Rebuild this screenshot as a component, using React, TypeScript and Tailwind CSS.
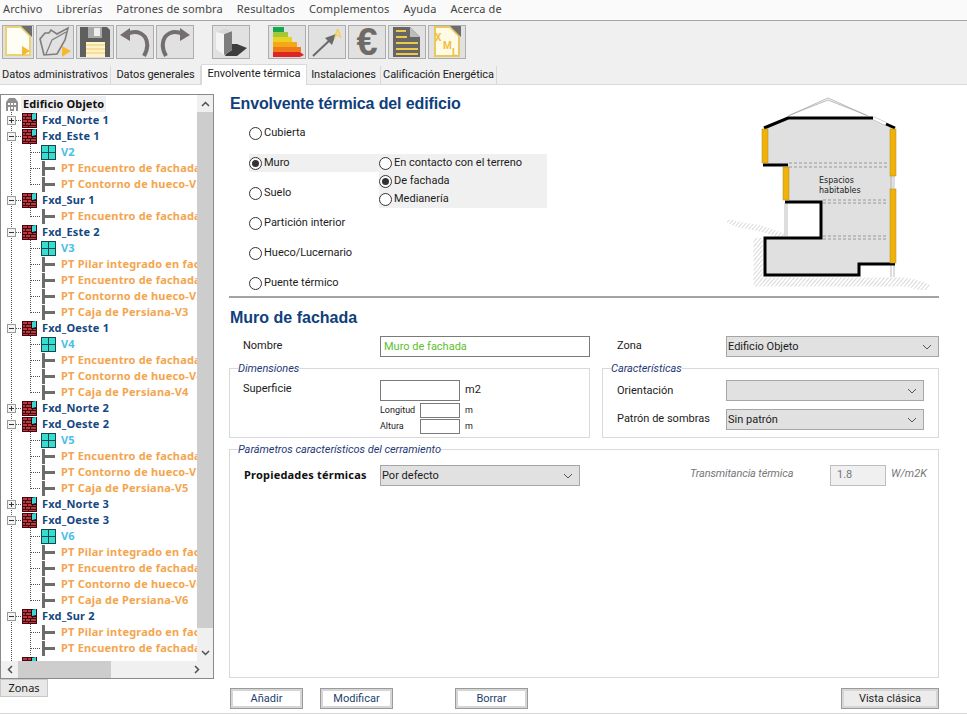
import React from "react";

const menu = ["Archivo", "Librerías", "Patrones de sombra", "Resultados", "Complementos", "Ayuda", "Acerca de"];

function WallIcon() {
  return (
    <svg width="15" height="15" viewBox="0 0 15 15" className="shrink-0">
      <rect x="0" y="0" width="15" height="15" fill="#3a0f14" />
      <g fill="#c9303c">
        <rect x="1" y="1" width="4" height="2" /><rect x="6" y="1" width="3" height="2" />
        <rect x="1" y="4" width="2" height="2" /><rect x="4" y="4" width="5" height="2" />
        <rect x="1" y="7" width="4" height="2" /><rect x="6" y="7" width="4" height="2" /><rect x="11" y="8" width="3" height="1" />
        <rect x="1" y="10" width="2" height="2" /><rect x="4" y="10" width="4" height="2" /><rect x="9" y="10" width="5" height="2" />
        <rect x="1" y="13" width="5" height="1" /><rect x="7" y="13" width="7" height="1" />
      </g>
      <path d="M10 1 L14 0 V6 L10 7 Z" fill="#39d8d4" />
      <rect x="9" y="0" width="1" height="8" fill="#111" />
      <rect x="10" y="7" width="5" height="1" fill="#111" />
    </svg>
  );
}

function WindowIcon() {
  return (
    <svg width="15" height="15" viewBox="0 0 15 15" className="shrink-0">
      <rect x="0" y="0" width="15" height="15" fill="#1b4547" />
      <rect x="1" y="1" width="6" height="6" fill="#35ded2" />
      <rect x="8" y="1" width="6" height="6" fill="#35ded2" />
      <rect x="1" y="8" width="6" height="6" fill="#35ded2" />
      <rect x="8" y="8" width="6" height="6" fill="#35ded2" />
    </svg>
  );
}

function ThermalIcon() {
  return (
    <svg width="15" height="15" viewBox="0 0 15 15" className="shrink-0">
      <rect x="1" y="0" width="3" height="15" fill="#6f6a6c" />
      <rect x="4" y="6" width="10" height="3" fill="#6f6a6c" />
    </svg>
  );
}

type Row = { t: string; k: "wall" | "win" | "pt"; open?: boolean; last?: boolean };

const rows: Row[] = [
  { t: "Fxd_Norte 1", k: "wall" },
  { t: "Fxd_Este 1", k: "wall", open: true },
  { t: "V2", k: "win" },
  { t: "PT Encuentro de fachada con forjado", k: "pt" },
  { t: "PT Contorno de hueco-V2", k: "pt", last: true },
  { t: "Fxd_Sur 1", k: "wall", open: true },
  { t: "PT Encuentro de fachada con forjado", k: "pt", last: true },
  { t: "Fxd_Este 2", k: "wall", open: true },
  { t: "V3", k: "win" },
  { t: "PT Pilar integrado en fachada", k: "pt" },
  { t: "PT Encuentro de fachada con forjado", k: "pt" },
  { t: "PT Contorno de hueco-V3", k: "pt" },
  { t: "PT Caja de Persiana-V3", k: "pt", last: true },
  { t: "Fxd_Oeste 1", k: "wall", open: true },
  { t: "V4", k: "win" },
  { t: "PT Encuentro de fachada con forjado", k: "pt" },
  { t: "PT Contorno de hueco-V4", k: "pt" },
  { t: "PT Caja de Persiana-V4", k: "pt", last: true },
  { t: "Fxd_Norte 2", k: "wall" },
  { t: "Fxd_Oeste 2", k: "wall", open: true },
  { t: "V5", k: "win" },
  { t: "PT Encuentro de fachada con forjado", k: "pt" },
  { t: "PT Contorno de hueco-V5", k: "pt" },
  { t: "PT Caja de Persiana-V5", k: "pt", last: true },
  { t: "Fxd_Norte 3", k: "wall" },
  { t: "Fxd_Oeste 3", k: "wall", open: true },
  { t: "V6", k: "win" },
  { t: "PT Pilar integrado en fachada", k: "pt" },
  { t: "PT Encuentro de fachada con forjado", k: "pt" },
  { t: "PT Contorno de hueco-V6", k: "pt" },
  { t: "PT Caja de Persiana-V6", k: "pt", last: true },
  { t: "Fxd_Sur 2", k: "wall", open: true },
  { t: "PT Pilar integrado en fachada", k: "pt" },
  { t: "PT Encuentro de fachada con forjado", k: "pt" },
  { t: "", k: "wall" },
];

function Gutter({ r }: { r: Row }) {
  const d = "#555";
  const dash = "1 1";
  if (r.k === "wall") {
    return (
      <svg width="21" height="16" className="shrink-0">
        <line x1="10.5" y1="0" x2="10.5" y2="16" stroke={d} strokeDasharray={dash} />
        <line x1="15" y1="8.5" x2="21" y2="8.5" stroke={d} strokeDasharray={dash} />
        {r.t && <rect x="6.5" y="4.5" width="8" height="8" fill="#f4f4f4" stroke="#9a9a9a" />}
        {r.t && <line x1="8" y1="8.5" x2="13" y2="8.5" stroke="#334" />}
        {r.t && !r.open && <line x1="10.5" y1="6" x2="10.5" y2="11" stroke="#334" />}
      </svg>
    );
  }
  return (
    <svg width="40" height="16" className="shrink-0">
      <line x1="10.5" y1="0" x2="10.5" y2="16" stroke={d} strokeDasharray={dash} />
      <line x1="29.5" y1="0" x2="29.5" y2={r.last ? 9 : 16} stroke={d} strokeDasharray={dash} />
      <line x1="30" y1="8.5" x2="40" y2="8.5" stroke={d} strokeDasharray={dash} />
    </svg>
  );
}

function TreeRow({ r }: { r: Row }) {
  return (
    <div className="flex h-4 items-center whitespace-nowrap">
      <Gutter r={r} />
      {r.k === "wall" ? <WallIcon /> : r.k === "win" ? <WindowIcon /> : <ThermalIcon />}
      <span
        className={
          "ml-[5px] text-[11px] font-bold tracking-[0.2px] " +
          (r.k === "wall" ? "text-[#16477f]" : r.k === "win" ? "text-[#4dbde8]" : "text-[#f2a64f]")
        }
      >
        {r.t}
      </span>
    </div>
  );
}

function TreePanel() {
  return (
    <div className="flex h-[585px] w-[214px] shrink-0 flex-col border border-[#8a8a8a] bg-white">
      <div className="flex min-h-0 flex-1">
        <div className="min-w-0 flex-1 overflow-hidden pt-[1px]">
          <div className="flex h-4 items-center">
            <svg width="16" height="15" viewBox="0 0 16 15" className="ml-[3px] shrink-0">
              <path d="M2 5 L5 1 H11 L14 5 V14 H2 Z" fill="#8f8f8f" />
              <g fill="#fff">
                <rect x="4" y="6" width="2" height="2" /><rect x="7" y="6" width="2" height="2" /><rect x="10" y="6" width="2" height="2" />
                <rect x="4" y="10" width="2" height="4" /><rect x="10" y="10" width="2" height="4" /><rect x="7" y="10" width="2" height="2" />
              </g>
            </svg>
            <span className="ml-[1px] bg-[#f0f0f0] px-[2px] text-[11px] font-bold tracking-[0.1px] text-[#111]">Edificio Objeto</span>
          </div>
          {rows.map((r, i) => (
            <TreeRow key={i} r={r} />
          ))}
        </div>
        <div className="flex w-[16px] shrink-0 flex-col bg-[#f0f0f0]">
          <div className="flex h-[17px] shrink-0 items-center justify-center">
            <svg width="9" height="6" viewBox="0 0 9 6"><path d="M1 5 L4.5 1.5 L8 5" fill="none" stroke="#505050" strokeWidth="1.5" /></svg>
          </div>
          <div className="h-[516px] shrink-0 bg-[#cdcdcd]" />
          <div className="flex-1" />
          <div className="flex h-[17px] shrink-0 items-center justify-center">
            <svg width="9" height="6" viewBox="0 0 9 6"><path d="M1 1 L4.5 4.5 L8 1" fill="none" stroke="#505050" strokeWidth="1.5" /></svg>
          </div>
        </div>
      </div>
      <div className="flex h-[17px] shrink-0 bg-[#f0f0f0]">
        <div className="flex w-[17px] items-center justify-center">
          <svg width="6" height="9" viewBox="0 0 6 9"><path d="M5 1 L1.5 4.5 L5 8" fill="none" stroke="#505050" strokeWidth="1.5" /></svg>
        </div>
        <div className="w-[93px] bg-[#cdcdcd]" />
        <div className="flex-1" />
        <div className="flex w-[33px] items-center justify-center">
          <svg width="6" height="9" viewBox="0 0 6 9"><path d="M1 1 L4.5 4.5 L1 8" fill="none" stroke="#505050" strokeWidth="1.5" /></svg>
        </div>
      </div>
    </div>
  );
}

function Radio({ label, on }: { label: string; on?: boolean }) {
  return (
    <div className="flex items-center text-[11px] text-[#1c1c1c]">
      <span className="mr-[2px] flex h-[13px] w-[13px] items-center justify-center rounded-full border border-[#333] bg-white">
        {on && <span className="h-[7px] w-[7px] rounded-full bg-[#333]" />}
      </span>
      {label}
    </div>
  );
}

function Chevron() {
  return (
    <svg width="10" height="6" viewBox="0 0 10 6" className="shrink-0">
      <path d="M1 1 L5 5 L9 1" fill="none" stroke="#555" strokeWidth="1" />
    </svg>
  );
}

function Select({ value, className }: { value: string; className: string }) {
  return (
    <div className={"flex h-[21px] shrink-0 items-center justify-between border border-[#a6a6a6] bg-[#e1e1e1] pl-[1px] pr-[6px] pt-[1px] text-[11px] text-[#1c1c1c] " + className}>
      <span>{value}</span>
      <Chevron />
    </div>
  );
}

function Btn({ label, className }: { label: string; className: string }) {
  return (
    <button className={"h-[21px] shrink-0 border-[3px] border-[#d6d6d6] text-[11px] outline outline-1 -outline-offset-1 outline-[#9a9a9a] " + className}>
      {label}
    </button>
  );
}

function Building() {
  return (
    <svg width="240" height="200" viewBox="0 0 240 200" className="block shrink-0">
      <defs>
        <pattern id="h" width="3" height="3" patternUnits="userSpaceOnUse" patternTransform="rotate(40)">
          <line x1="0" y1="0" x2="0" y2="3" stroke="#aaa" strokeWidth="0.9" />
        </pattern>
      </defs>
      <path d="M9 130 Q11 134 33 137 Q50 140 64 147" fill="none" stroke="url(#h)" strokeWidth="6" />
      <path d="M38 148 V192 H172 Q190 190 208 199" fill="none" stroke="url(#h)" strokeWidth="9" />
      <path d="M68 26 L108 8 L148 26 M70 25 L108 10 L146 25" fill="none" stroke="#a8a8a8" strokeWidth="0.8" />
      <path d="M44 38 V75 H68 V112 H101 V148 H45 V185 H138 V174 H173 V38 L165 33 L150 28 H68 Z" fill="#e0e0e0" />
      <path d="M153 28 L166 34" stroke="#999" strokeWidth="3.5" />
      <path d="M153 28 L166 34" stroke="#fff" strokeWidth="2.5" />
      <g stroke="#888" strokeDasharray="3 2" strokeWidth="0.8">
        <line x1="69" y1="73" x2="168" y2="73" /><line x1="69" y1="77" x2="168" y2="77" />
        <line x1="103" y1="110" x2="168" y2="110" /><line x1="103" y1="113" x2="168" y2="113" />
        <line x1="103" y1="146" x2="168" y2="146" /><line x1="103" y1="149" x2="168" y2="149" />
      </g>
      <path d="M44 38 L68 28 H153" fill="none" stroke="#000" strokeWidth="3" />
      <path d="M166 34 L175 38" fill="none" stroke="#000" strokeWidth="3" />
      <path d="M65 113 V146 M67 113 V146" stroke="#aaa" strokeWidth="0.8" />
      <path d="M171 86 V99 M174 86 V99 M171 175 V187 M174 175 V187" stroke="#aaa" strokeWidth="0.8" />
      <path d="M43 75 H68 M65 112 H101 V148 H45 V185 H139 V174 H175" fill="none" stroke="#000" strokeWidth="3" />
      <g fill="#f2b106" stroke="#a88a30" strokeWidth="0.5">
        <rect x="42" y="39" width="6" height="34" />
        <rect x="63" y="77" width="6" height="33" />
        <rect x="170" y="39" width="6" height="47" />
        <rect x="170" y="99" width="6" height="74" />
      </g>
      <text x="99" y="93" fontSize="8" fill="#222" fontFamily="DejaVu Sans, sans-serif">Espacios</text>
      <text x="99" y="103" fontSize="8" fill="#222" fontFamily="DejaVu Sans, sans-serif">habitables</text>
    </svg>
  );
}

const tbBtn = "flex h-[34px] shrink-0 items-center justify-center border border-[#adadad] bg-[#e1e1e1]";

function Toolbar() {
  return (
    <div className="flex h-[40px] items-center bg-[#f0f0f0] pl-[2px] pt-[1px]">
      <div className="flex gap-[2px]">
        <div className={tbBtn + " w-[32px]"}>
          <svg width="28" height="31" viewBox="0 0 28 31">
            <path d="M2 1 H17 L26 10 V29 H2 Z" fill="#fffef4" stroke="#ecd277" strokeWidth="2" />
            <path d="M17 0 L28 11 V0 Z" fill="#6d6d6d" />
            <path d="M18 20 L26 25 L18 30 Z" fill="#f6b92e" />
          </svg>
        </div>
        <div className={tbBtn + " w-[38px]"}>
          <svg width="34" height="32" viewBox="0 0 34 32">
            <path d="M6 29 L2 13 L7 7 L11 7 L13 4 L19 8 L30 2 L27 14 L19 28 Z" fill="none" stroke="#7d7d7d" strokeWidth="1.6" />
            <path d="M8 28 L14 14 L28 6" fill="none" stroke="#7d7d7d" strokeWidth="1.2" />
            <path d="M24 20 L33 25 L24 31 Z" fill="#f6b92e" />
          </svg>
        </div>
        <div className={tbBtn + " w-[38px]"}>
          <svg width="32" height="32" viewBox="0 0 32 32">
            <path d="M1 1 H28 L31 4 V31 H1 Z" fill="#5f5f5f" />
            <rect x="9" y="1" width="14" height="11" fill="#a9a9a9" />
            <rect x="15" y="2" width="6" height="8" fill="#eee" />
            <rect x="7" y="16" width="19" height="15" fill="#fff3cc" />
            <g stroke="#f0c860"><line x1="7" y1="19" x2="26" y2="19" /><line x1="7" y1="23" x2="26" y2="23" /><line x1="7" y1="27" x2="26" y2="27" /></g>
          </svg>
        </div>
        <div className={tbBtn + " w-[38px]"}>
          <svg width="32" height="32" viewBox="0 0 32 32">
            <path d="M8 8 Q19 3 26 11 Q31 19 25 30" fill="none" stroke="#746e6e" strokeWidth="4" />
            <path d="M1 9 L11 2 L11 15 Z" fill="#746e6e" />
          </svg>
        </div>
        <div className={tbBtn + " w-[38px]"}>
          <svg width="32" height="32" viewBox="0 0 32 32">
            <path d="M24 8 Q13 3 6 11 Q1 19 7 30" fill="none" stroke="#746e6e" strokeWidth="4" />
            <path d="M31 9 L21 2 L21 15 Z" fill="#746e6e" />
          </svg>
        </div>
      </div>
      <div className={tbBtn + " ml-[18px] w-[38px]"}>
        <svg width="36" height="32" viewBox="0 0 36 32">
          <path d="M17 18 H24 L34 22 L24 30 L12 30 Z" fill="#3d3d3d" />
          <path d="M3 6 L13 2 L19 5 V24 L11 29 L3 23 Z" fill="#f4f4f4" />
          <path d="M11 8 L19 5 V24 L11 29 Z" fill="#7d7d7d" />
          <path d="M3 6 L13 2 L19 5 L11 8 Z" fill="#d8d8d8" />
        </svg>
      </div>
      <div className="ml-[18px] flex gap-[2px]">
        <div className={tbBtn + " w-[38px]"}>
          <svg width="34" height="32" viewBox="0 0 34 32">
            <rect x="3" y="1" width="11" height="5" fill="#17a64a" />
            <rect x="3" y="6" width="15" height="5" fill="#a4c83a" />
            <rect x="3" y="11" width="19" height="5" fill="#e8d420" />
            <rect x="3" y="16" width="24" height="5" fill="#f4a818" />
            <rect x="3" y="21" width="28" height="5" fill="#ee7a18" />
            <path d="M3 26 H30 L34 29 L30 31 H3 Z" fill="#e02424" />
          </svg>
        </div>
        <div className={tbBtn + " relative w-[38px]"}>
          <svg width="34" height="32" viewBox="0 0 34 32">
            <path d="M3 30 L21 13" stroke="#6a6a6a" strokeWidth="2" />
            <path d="M26 8 L15 12 L22 19 Z" fill="#6a6a6a" />
          </svg>
          <span className="absolute right-[3px] top-[-1px] text-[12px] font-bold text-[#f4d060]">A</span>
        </div>
        <div className={tbBtn + " w-[38px]"}>
          <span className="text-[38px] font-bold leading-none text-[#6e6a66]" style={{ fontFamily: "'Liberation Sans', sans-serif" }}>€</span>
        </div>
        <div className={tbBtn + " w-[38px]"}>
          <svg width="28" height="32" viewBox="0 0 28 32">
            <path d="M0 1 H17 L27 11 V31 H0 Z" fill="#666" />
            <path d="M17 1 L27 11 H17 Z" fill="#bdbdbd" />
            <g stroke="#f0c848" strokeWidth="2">
              <line x1="3" y1="5" x2="13" y2="5" /><line x1="3" y1="11" x2="14" y2="11" />
              <line x1="3" y1="17" x2="25" y2="17" /><line x1="3" y1="23" x2="25" y2="23" /><line x1="3" y1="28" x2="25" y2="28" />
            </g>
          </svg>
        </div>
        <div className={tbBtn + " relative w-[38px]"}>
          <svg width="28" height="32" viewBox="0 0 28 32">
            <path d="M2 1 H17 L26 10 V30 H2 Z" fill="#fffbe6" stroke="#e8c860" strokeWidth="2" />
            <path d="M17 0 L28 11 V0 Z" fill="#6d6d6d" />
          </svg>
          <span className="absolute left-[6px] top-[7px] text-[10px] font-bold leading-none text-[#f0c040]">X</span>
          <span className="absolute left-[14px] top-[15px] text-[10px] font-bold leading-none text-[#f0c040]">M</span>
          <span className="absolute left-[23px] top-[22px] text-[10px] font-bold leading-none text-[#f0c040]">L</span>
        </div>
      </div>
    </div>
  );
}

function Tabs() {
  const tab = "flex h-[18px] items-center justify-center whitespace-nowrap border-r border-[#d9d9d9] bg-[#f0f0f0] pt-[1px] text-[11px] tracking-[-0.05px] text-[#1c1c1c]";
  return (
    <div className="flex h-[24px] items-end border-b border-[#d9d9d9] bg-[#f0f0f0]">
      <div className={tab + " w-[111px]"}>Datos administrativos</div>
      <div className={tab + " w-[90px]"}>Datos generales</div>
      <div className="-mb-[1px] flex h-[21px] w-[106px] items-center justify-center whitespace-nowrap border-x border-t border-[#d9d9d9] bg-white pb-[2px] text-[11px] text-[#1c1c1c]">Envolvente térmica</div>
      <div className={tab + " w-[74px]"}>Instalaciones</div>
      <div className={tab + " w-[116px]"}>Calificación Energética</div>
    </div>
  );
}

const legendCls = "text-[11px] italic leading-[11px] tracking-[-0.05px] text-[#1f3a78]";
const labelCls = "text-[11px] text-[#1c1c1c]";
const boldFont = { fontFamily: "'Noto Sans', sans-serif" };
const headFont = { fontFamily: "'Liberation Sans', sans-serif" };

export default function App() {
  return (
    <div className="flex h-[714px] w-[967px] flex-col overflow-hidden bg-white" style={{ fontFamily: "Roboto, sans-serif" }}>
      <div className="flex h-[21px] shrink-0 items-center gap-[14px] border-b border-[#a6a6a6] bg-[#fafafa] pb-[2px] pl-[3px] text-[11px] tracking-[0.13px] text-[#444]" style={boldFont}>
        {menu.map((m) => (
          <span key={m}>{m}</span>
        ))}
      </div>
      <Toolbar />
      <Tabs />
      <div className="flex min-h-0 flex-1 border-b border-[#d6d6d6]">
        <div className="flex w-[229px] shrink-0 flex-col pt-[9px]" style={boldFont}>
          <TreePanel />
          <div className="flex h-[18px] w-[48px] shrink-0 items-center justify-center border border-[#c8c8c8] bg-[#e8e8e8] text-[11px] text-[#1c1c1c]">Zonas</div>
        </div>
        <div className="flex min-w-0 flex-1 flex-col pr-[28px] pt-[9px]">
          <h1 className="h-[22px] shrink-0 pl-[1px] text-[16px] font-bold leading-[20px] tracking-[-0.13px] text-[#0f3f7c]" style={headFont}>
            Envolvente térmica del edificio
          </h1>
          <div className="flex h-[182px] shrink-0 border-b-2 border-[#a3a3a3]">
            <div className="ml-[20px] flex w-[130px] shrink-0 flex-col pt-[2px]">
              {["Cubierta", "Muro", "Suelo", "Partición interior", "Hueco/Lucernario", "Puente térmico"].map((l) => (
                <div key={l} className="flex h-[30px] shrink-0 items-center">
                  <div className={"flex h-[18px] w-full items-center " + (l === "Muro" ? "bg-[#f0f0f0]" : "")}>
                    <Radio label={l} on={l === "Muro"} />
                  </div>
                </div>
              ))}
            </div>
            <div className="mt-[38px] flex h-[54px] w-[168px] shrink-0 flex-col bg-[#f0f0f0]">
              <div className="flex h-[18px] items-center"><Radio label="En contacto con el terreno" /></div>
              <div className="flex h-[18px] items-center"><Radio label="De fachada" on /></div>
              <div className="flex h-[18px] items-center"><Radio label="Medianería" /></div>
            </div>
            <div className="ml-auto -mt-[26px] mr-[-21px] h-[200px]"><Building /></div>
          </div>
          <h2 className="mt-[10px] h-[20px] shrink-0 pl-[1px] text-[16px] font-bold leading-[20px] text-[#0f3f7c]" style={headFont}>
            Muro de fachada
          </h2>
          <div className="mt-[8px] flex h-[21px] shrink-0 items-center">
            <span className={labelCls + " ml-[14px] w-[137px] shrink-0 pb-[1px]"}>Nombre</span>
            <div className="flex h-[21px] w-[210px] shrink-0 items-center border border-[#7a7a7a] pl-[3px] pt-[1px] text-[11px] text-[#5cc02c]">Muro de fachada</div>
            <span className={labelCls + " ml-[27px] w-[109px] shrink-0 pb-[1px]"}>Zona</span>
            <Select value="Edificio Objeto" className="w-[213px]" />
          </div>
          <div className="mt-[6px] flex h-[75px] shrink-0 gap-[12px]">
            <fieldset className="h-[75px] w-[361px] border border-[#d9d9d9] px-[13px]">
              <legend className={legendCls + " -ml-[5px]"}>Dimensiones</legend>
              <div className="mt-[6px] flex h-[21px] items-start">
                <span className={labelCls + " w-[137px] pt-[1px]"}>Superficie</span>
                <div className="h-[21px] w-[80px] border border-[#7a7a7a]" />
                <span className={labelCls + " ml-[5px] pt-[2px]"}>m2</span>
              </div>
              <div className="mt-[2px] flex h-[15px] items-center">
                <span className="ml-[137px] w-[40px] pt-[1px] text-[9px] text-[#1c1c1c]">Longitud</span>
                <div className="h-[15px] w-[40px] border border-[#7a7a7a]" />
                <span className="ml-[5px] pt-[1px] text-[9px] text-[#1c1c1c]">m</span>
              </div>
              <div className="mt-[1px] flex h-[15px] items-center">
                <span className="ml-[137px] w-[40px] pt-[1px] text-[9px] text-[#1c1c1c]">Altura</span>
                <div className="h-[15px] w-[40px] border border-[#7a7a7a]" />
                <span className="ml-[5px] pt-[1px] text-[9px] text-[#1c1c1c]">m</span>
              </div>
            </fieldset>
            <fieldset className="h-[75px] w-[337px] border border-[#d9d9d9] px-[14px]">
              <legend className={legendCls + " -ml-[6px]"}>Características</legend>
              <div className="mt-[6px] flex h-[21px] items-center">
                <span className={labelCls + " w-[109px] shrink-0 pt-[1px]"}>Orientación</span>
                <Select value="" className="w-[198px]" />
              </div>
              <div className="mt-[8px] flex h-[21px] items-center">
                <span className={labelCls + " w-[109px] shrink-0 pb-[1px]"}>Patrón de sombras</span>
                <Select value="Sin patrón" className="w-[198px]" />
              </div>
            </fieldset>
          </div>
          <fieldset className="mt-[6px] h-[234px] shrink-0 border border-[#d9d9d9] pl-[14px] pr-[10px]">
            <legend className={legendCls + " -ml-[6px]"}>Parámetros característicos del cerramiento</legend>
            <div className="mt-[10px] flex h-[21px] items-center">
              <span className="w-[136px] shrink-0 text-[11px] font-bold tracking-[0.2px] text-[#111]" style={boldFont}>Propiedades térmicas</span>
              <Select value="Por defecto" className="w-[200px]" />
              <span className="ml-[110px] w-[140px] shrink-0 pb-[3px] text-[11px] italic tracking-[-0.15px] text-[#777]">Transmitancia térmica</span>
              <div className="flex h-[21px] w-[56px] shrink-0 items-center border border-[#bdbdbd] bg-[#f0f0f0] pl-[6px] text-[11px] text-[#777]">1.8</div>
              <span className="ml-[5px] pb-[3px] text-[11px] italic text-[#777]">W/m2K</span>
            </div>
          </fieldset>
          <div className="mt-[10px] flex h-[21px] shrink-0">
            <Btn label="Añadir" className="ml-[1px] w-[73px] bg-white text-[#1d3f70]" />
            <Btn label="Modificar" className="ml-[17px] w-[73px] bg-white text-[#1d3f70]" />
            <Btn label="Borrar" className="ml-[62px] w-[73px] bg-white text-[#1d3f70]" />
            <Btn label="Vista clásica" className="ml-auto w-[98px] bg-[#ececec] text-[#222]" />
          </div>
        </div>
      </div>
    </div>
  );
}
